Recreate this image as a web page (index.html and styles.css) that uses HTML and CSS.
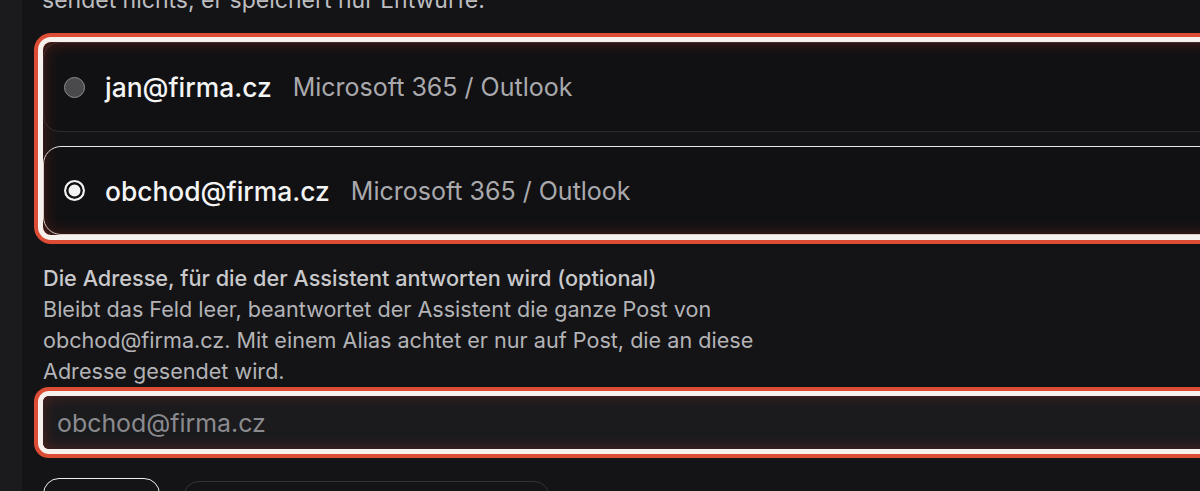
FILE: index.html
```html
<!DOCTYPE html>
<html lang="de">
<head>
    <meta charset="UTF-8">
    <meta name="viewport" content="width=device-width, initial-scale=1.0">
    <title>Postfach wählen</title>
    <link rel="stylesheet" href="styles.css">
</head>
<body>
    <aside class="rail"></aside>
    <main class="content">
        <p class="lead">sendet nichts, er speichert nur Entwürfe.</p>

        <div class="accounts" role="radiogroup">
            <label class="account">
                <input type="radio" name="account" value="jan">
                <span class="email">jan@firma.cz</span>
                <span class="provider">Microsoft 365 / Outlook</span>
            </label>
            <label class="account selected">
                <input type="radio" name="account" value="obchod" checked>
                <span class="email">obchod@firma.cz</span>
                <span class="provider">Microsoft 365 / Outlook</span>
            </label>
        </div>

        <div class="field">
            <label class="field-label" for="alias">Die Adresse, für die der Assistent antworten wird (optional)</label>
            <p class="hint">Bleibt das Feld leer, beantwortet der Assistent die ganze Post von obchod@firma.cz. Mit einem Alias achtet er nur auf Post, die an diese Adresse gesendet wird.</p>
            <div class="alias-wrap">
                <input class="alias" id="alias" type="text" placeholder="obchod@firma.cz">
            </div>
        </div>

        <div class="actions">
            <button class="btn primary">Weiter</button>
            <button class="btn secondary">Anderes Postfach verbinden</button>
        </div>
    </main>
</body>
</html>
```

FILE: styles.css
```css
body {
    margin: 0;
    display: flex;
    height: 100vh;
    overflow: hidden;
    background-color: #141416;
    font-family: Inter, "Noto Sans", sans-serif;
    color: #f2f2f2;
}

.rail {
    width: 22px;
    flex-shrink: 0;
    background-color: #1b1b1e;
}

.content {
    width: 1400px;
    flex-shrink: 0;
    padding-left: 21px;
}

.lead {
    margin: -15px 0 0 -1px;
    font-size: 23px;
    line-height: 31px;
    color: #bdbdc0;
}

/* radio group with focus ring */
.accounts {
    position: relative;
    margin-top: 26px;
    display: flex;
    flex-direction: column;
    gap: 14px;
    border-radius: 8px;
    box-shadow: 0 0 0 5px #f7f1ee, 0 0 0 9px #dd4d35;
}

.accounts::after {
    content: "";
    position: absolute;
    inset: 0;
    border-radius: 8px;
    box-shadow: inset 0 0 16px rgba(190, 55, 35, 0.38);
    pointer-events: none;
}

.account {
    display: flex;
    align-items: center;
    height: 88px;
    padding-left: 20px;
    border: 1px solid #2c2c30;
    border-radius: 16px;
    background-color: #111113;
    cursor: pointer;
}

.account.selected {
    height: 87px;
    border-color: #e8e8e8;
    border-radius: 18px;
}

.account input {
    appearance: none;
    width: 21px;
    height: 21px;
    margin: 0 20px 0 0;
    border: 1.5px solid #8e8e90;
    border-radius: 50%;
    background-color: #4a4a4d;
    flex-shrink: 0;
}

.account input:checked {
    border: 2px solid #f2f2f2;
    background-color: #f2f2f2;
    box-shadow: inset 0 0 0 2.5px #111113;
}

.email {
    font-size: 26.4px;
    font-weight: 500;
    color: #f4f4f5;
    margin-right: 21px;
}

.provider {
    font-size: 25px;
    color: #a9a9ad;
}

.field {
    margin-top: 28px;
}

.field-label {
    display: block;
    font-size: 21.7px;
    font-weight: 500;
    line-height: 31px;
    color: #c9c9cc;
}

.hint {
    max-width: 760px;
    margin: 0 0 9px;
    font-size: 21.6px;
    line-height: 31px;
    color: #b3b3b7;
}

.alias-wrap {
    position: relative;
    border-radius: 6px;
    box-shadow: 0 0 0 5px #f7f1ee, 0 0 0 9px #dd4d35;
}

.alias {
    display: block;
    box-sizing: border-box;
    width: 100%;
    height: 53px;
    padding: 0 14px;
    border: none;
    border-radius: 6px;
    outline: none;
    background-color: #1b1b1e;
    box-shadow: inset 0 0 14px rgba(190, 55, 35, 0.34);
    font-family: inherit;
    font-size: 24.9px;
    color: #f2f2f2;
}

.alias::placeholder {
    color: #8b8b8f;
}

.actions {
    display: flex;
    align-items: flex-start;
    gap: 23px;
    margin-top: 29px;
}

.btn {
    height: 66px;
    padding: 0 24px;
    border-radius: 16px;
    background-color: transparent;
    font-family: inherit;
    font-size: 20px;
    color: #f2f2f2;
    cursor: pointer;
}

.btn.primary {
    width: 117px;
    border: 1.5px solid #ededed;
}

.btn.secondary {
    width: 367px;
    margin-top: 3px;
    border: 1.5px solid #333336;
}
```
